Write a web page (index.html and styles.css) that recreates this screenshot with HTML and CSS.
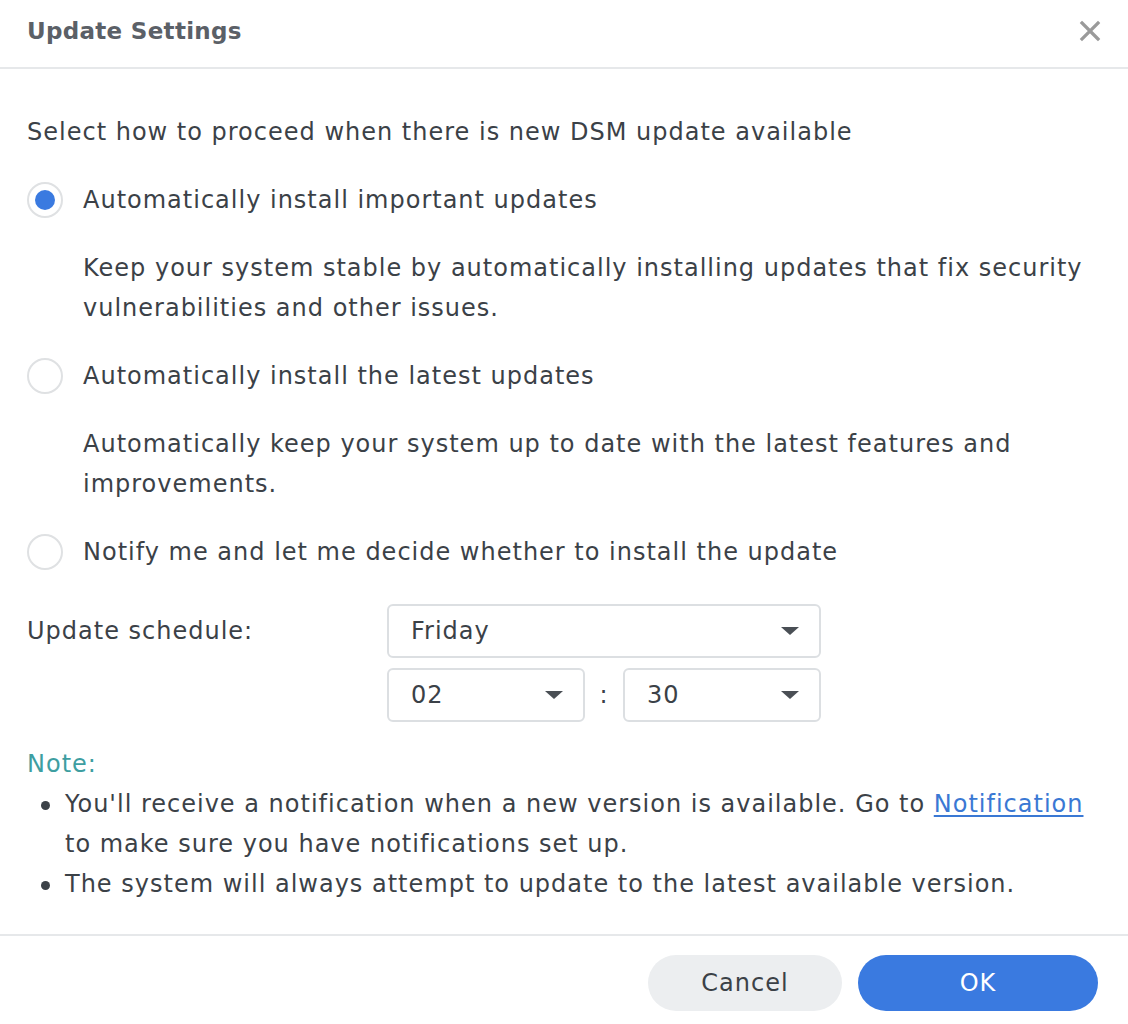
FILE: index.html
```html
<!DOCTYPE html>
<html>
<head>
<meta charset="utf-8">
<link rel="stylesheet" href="styles.css">
</head>
<body>
<div class="dialog">
  <div class="header">
    <div class="title">Update Settings</div>
    <div class="close">
      <svg width="22" height="22" viewBox="0 0 22 22"><path d="M3 3 L19 19 M19 3 L3 19" stroke="#9a9a9a" stroke-width="3.2" stroke-linecap="square"/></svg>
    </div>
  </div>
  <div class="body">
    <div class="lead">Select how to proceed when there is new DSM update available</div>
    <div class="option">
      <span class="radio checked"><span class="dot"></span></span>
      <span class="label">Automatically install important updates</span>
    </div>
    <div class="desc">Keep your system stable by automatically installing updates that fix security vulnerabilities and other issues.</div>
    <div class="option">
      <span class="radio"></span>
      <span class="label">Automatically install the latest updates</span>
    </div>
    <div class="desc">Automatically keep your system up to date with the latest features and improvements.</div>
    <div class="option">
      <span class="radio"></span>
      <span class="label">Notify me and let me decide whether to install the update</span>
    </div>
    <div class="schedule">
      <div class="sched-label">Update schedule:</div>
      <div class="sched-fields">
        <div class="select wide"><span>Friday</span><span class="caret"></span></div>
        <div class="time-row">
          <div class="select half"><span>02</span><span class="caret"></span></div>
          <span class="colon">:</span>
          <div class="select half"><span>30</span><span class="caret"></span></div>
        </div>
      </div>
    </div>
    <div class="note-title">Note:</div>
    <ul class="notes">
      <li>You'll receive a notification when a new version is available. Go to <a href="#">Notification</a><br>to make sure you have notifications set up.</li>
      <li>The system will always attempt to update to the latest available version.</li>
    </ul>
  </div>
  <div class="footer">
    <button class="btn cancel">Cancel</button>
    <button class="btn ok">OK</button>
  </div>
</div>
</body>
</html>
```
FILE: styles.css
```css
* { box-sizing: border-box; }
html, body { margin: 0; padding: 0; background: #fff; }
body {
  font-family: "DejaVu Sans", Verdana, sans-serif;
  color: #3b4147;
  font-size: 24px;
  letter-spacing: 1px;
}
.dialog { width: 1128px; height: 1024px; display: flex; flex-direction: column; }
.header {
  height: 69px;
  border-bottom: 2px solid #e6e8ea;
  display: flex;
  align-items: center;
  justify-content: space-between;
  padding: 0 27px 6px 27px;
}
.title { font-weight: bold; color: #5b6067; font-size: 23px; letter-spacing: 0.3px; }
.close { width: 22px; height: 22px; }
.close svg { display: block; }
.body { padding: 0 27px; flex: 1; }
.lead { margin-top: 43px; line-height: 40px; }
.option { display: flex; align-items: center; height: 40px; margin-top: 28px; }
.radio {
  width: 36px; height: 36px; border-radius: 50%;
  border: 2px solid #dfe1e3;
  display: flex; align-items: center; justify-content: center;
  margin-right: 20px;
  flex: none;
}
.dot { width: 20px; height: 20px; border-radius: 50%; background: #3a7ae0; }
.label { line-height: 40px; }
.desc { padding-left: 56px; margin-top: 28px; line-height: 40px; }
.schedule { display: flex; margin-top: 32px; }
.sched-label { width: 360px; line-height: 54px; }
.sched-fields { display: flex; flex-direction: column; gap: 10px; }
.select {
  height: 54px;
  border: 2px solid #dcdfe2;
  border-radius: 6px;
  display: flex; align-items: center; justify-content: space-between;
  padding: 0 20px 0 22px;
}
.wide { width: 434px; }
.half { width: 198px; }
.caret {
  width: 0; height: 0;
  border-left: 9px solid transparent;
  border-right: 9px solid transparent;
  border-top: 8px solid #4a4f55;
}
.time-row { display: flex; align-items: center; }
.colon { width: 38px; text-align: center; }
.note-title { color: #3e9ea1; margin-top: 22px; line-height: 40px; }
.notes { list-style: none; margin: 0; padding: 0 0 0 38px; }
.notes li { position: relative; line-height: 40px; }
.notes li::before {
  content: ""; position: absolute; left: -24px; top: 17px;
  width: 9px; height: 9px; border-radius: 50%; background: #3b4147;
}
.notes a { color: #3a78d4; text-decoration: underline; text-underline-offset: 3px; }
.footer {
  border-top: 2px solid #e6e8ea;
  height: 90px;
  display: flex; justify-content: flex-end; align-items: center;
  padding: 6px 30px 0 0;
  gap: 16px;
}
.btn {
  height: 56px; border-radius: 28px; border: none;
  font-family: "DejaVu Sans", Verdana, sans-serif; font-size: 24px;
  letter-spacing: 1px;
}
.cancel { width: 194px; background: #eceef0; color: #3b4147; }
.ok { width: 240px; background: #3a7ae0; color: #fff; }
```
